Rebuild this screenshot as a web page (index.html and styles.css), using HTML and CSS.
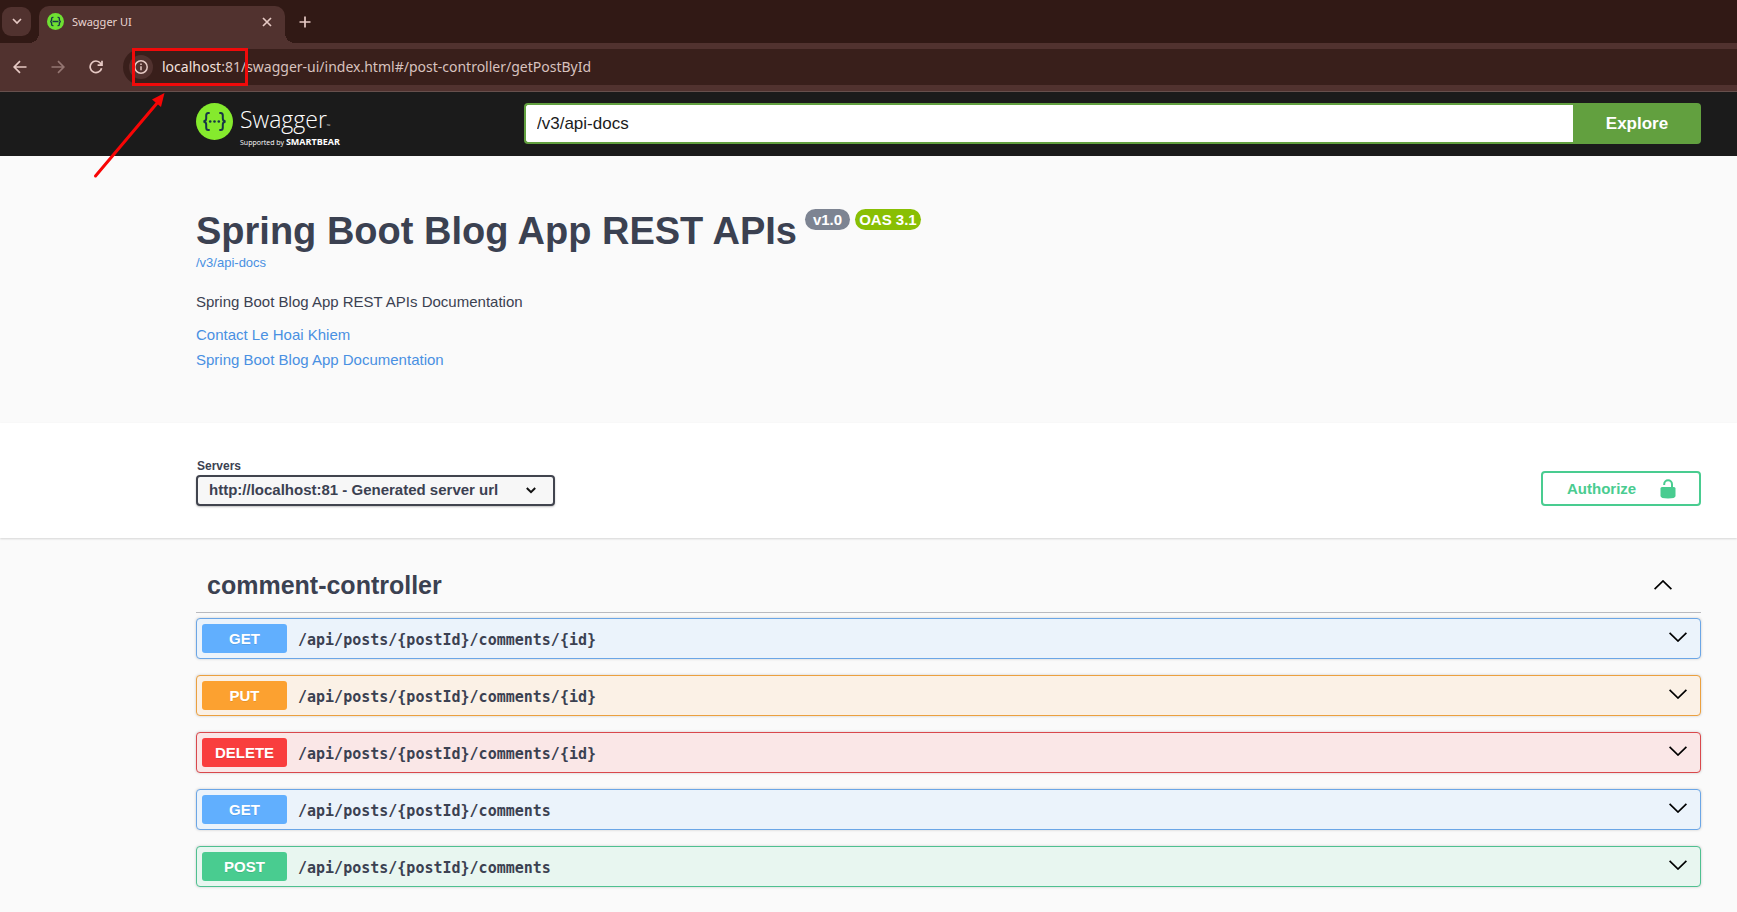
FILE: index.html
```html
<!DOCTYPE html>
<html lang="en">
<head>
<meta charset="utf-8">
<title>Swagger UI</title>
<link rel="stylesheet" href="styles.css">
</head>
<body>
<div class="browser">
  <div class="tabbar">
    <button class="tab-search" aria-label="Search tabs"><svg width="10" height="7" viewBox="0 0 10 7"><path d="M1 1l4 4 4-4"/></svg></button>
    <div class="tab">
      <svg class="favicon" width="17" height="17" viewBox="0 0 37 37"><circle cx="18.500" cy="18.500" r="18.500" fill="#6fe032"/><path d="M14 9.500h-1.500q-2.500 0-2.500 3v2.500q0 3-3 3.500 3 .5 3 3.500v2.500q0 3 2.500 3H14M23 9.500h1.500q2.500 0 2.500 3v2.500q0 3 3 3.500-3 .5-3 3.500v2.500q0 3-2.500 3H23M12 18.500h13" fill="none" stroke="#173647" stroke-width="3"/></svg>
      <span class="tab-title">Swagger UI</span>
      <button class="tab-close" aria-label="Close tab"><svg width="10" height="10" viewBox="0 0 10 10"><path d="M1 1l8 8M9 1l-8 8"/></svg></button>
    </div>
    <button class="tab-new" aria-label="New tab"><svg width="12" height="12" viewBox="0 0 12 12"><path d="M6 .5v11M.5 6h11"/></svg></button>
  </div>
  <div class="toolbar">
    <button class="nav" aria-label="Back"><svg width="14" height="14" viewBox="0 0 14 14"><path d="M13.500 7H1.500M7 1.200L1.200 7 7 12.800"/></svg></button>
    <button class="nav nav-off" aria-label="Forward"><svg width="14" height="14" viewBox="0 0 14 14"><path d="M.5 7h12M7 1.200L12.800 7 7 12.800"/></svg></button>
    <button class="nav" aria-label="Reload"><svg width="14" height="14" viewBox="0 0 14 14"><path d="M12.600 8.200A5.800 5.800 0 1 1 11.500 3.200L13 5M13 .8V5.200H8.600"/></svg></button>
    <div class="address">
      <button class="site-info" aria-label="Site information"><svg width="14" height="14" viewBox="0 0 14 14"><circle cx="7" cy="7" r="6.200"/><path d="M7 6.200v4M7 3.600v1.400"/></svg></button>
      <span class="url"><span class="host">localhost</span>:81/swagger-ui/index.html#/post-controller/getPostById</span>
    </div>
  </div>
</div>

<header class="topbar">
  <a class="logo" href="#">
    <svg width="37" height="37" viewBox="0 0 37 37"><circle cx="18.500" cy="18.500" r="18.500" fill="#85ea2d"/><path d="M13.700 10h-1.500q-2 0-2 2.500v3q0 2.500-2.700 3 2.700.5 2.700 3v3q0 2.500 2 2.500h1.500M23.300 10h1.500q2 0 2 2.500v3q0 2.500 2.700 3-2.700.5-2.700 3v3q0 2.500-2 2.500h-1.500" fill="none" stroke="#173647" stroke-width="2"/><g fill="#173647"><circle cx="14.200" cy="18.500" r="1.300"/><circle cx="18.500" cy="18.500" r="1.300"/><circle cx="22.800" cy="18.500" r="1.300"/></g></svg>
    <span class="wordmark">
      <span class="brand">Swagger<span class="tm">™</span></span>
      <span class="support">Supported by <b>SMARTBEAR</b></span>
    </span>
  </a>
  <form class="explore">
    <input type="text" value="/v3/api-docs" aria-label="API definition URL">
    <button type="button">Explore</button>
  </form>
</header>

<main>
  <section class="info">
    <div class="title-row">
      <h1>Spring Boot Blog App REST APIs</h1>
      <span class="pill version">v1.0</span>
      <span class="pill oas">OAS 3.1</span>
    </div>
    <a class="spec" href="#">/v3/api-docs</a>
    <p>Spring Boot Blog App REST APIs Documentation</p>
    <a class="info-link" href="#">Contact Le Hoai Khiem</a>
    <a class="info-link" href="#">Spring Boot Blog App Documentation</a>
  </section>

  <section class="schemes">
    <div class="servers">
      <label for="server">Servers</label>
      <div class="select-wrap">
        <select id="server"><option>http://localhost:81 - Generated server url</option></select>
        <svg width="10" height="7" viewBox="0 0 10 7"><path d="M.8 1L5 5.200 9.200 1"/></svg>
      </div>
    </div>
    <button class="authorize"><span>Authorize</span><svg width="16" height="20" viewBox="0 0 16 20"><path d="M4.200 6V5.200a3.900 3.900 0 0 1 7.800 0V9" fill="none" stroke="#49cc90" stroke-width="2"/><path d="M2 8h12q1.500 0 1.500 1.500V17q0 2.500-7.500 2.500T.5 17V9.500Q.5 8 2 8z" fill="#49cc90"/></svg></button>
  </section>

  <section class="operations">
    <div class="tag">
      <h2>comment-controller</h2>
      <button class="toggle" aria-label="Collapse"><svg width="18" height="10" viewBox="0 0 18 10"><path d="M.6 9.200L9 1l8.400 8.200"/></svg></button>
    </div>
    <div class="op get"><span class="method">GET</span><span class="path">/api/posts/{postId}/comments/{id}</span><button class="toggle" aria-label="Expand"><svg width="18" height="10" viewBox="0 0 18 10"><path d="M.6.8L9 9 17.400.8"/></svg></button></div>
    <div class="op put"><span class="method">PUT</span><span class="path">/api/posts/{postId}/comments/{id}</span><button class="toggle" aria-label="Expand"><svg width="18" height="10" viewBox="0 0 18 10"><path d="M.6.8L9 9 17.400.8"/></svg></button></div>
    <div class="op delete"><span class="method">DELETE</span><span class="path">/api/posts/{postId}/comments/{id}</span><button class="toggle" aria-label="Expand"><svg width="18" height="10" viewBox="0 0 18 10"><path d="M.6.8L9 9 17.400.8"/></svg></button></div>
    <div class="op get"><span class="method">GET</span><span class="path">/api/posts/{postId}/comments</span><button class="toggle" aria-label="Expand"><svg width="18" height="10" viewBox="0 0 18 10"><path d="M.6.8L9 9 17.400.8"/></svg></button></div>
    <div class="op post"><span class="method">POST</span><span class="path">/api/posts/{postId}/comments</span><button class="toggle" aria-label="Expand"><svg width="18" height="10" viewBox="0 0 18 10"><path d="M.6.8L9 9 17.400.8"/></svg></button></div>
  </section>
</main>

<svg class="callout" width="170" height="140" viewBox="0 0 170 140" aria-hidden="true">
  <rect x="48.500" y="6.500" width="113" height="35" fill="none" stroke="#f00a0a" stroke-width="3"/>
  <path d="M10.500 133L73 59" stroke="#f80505" stroke-width="3" stroke-linecap="round"/>
  <path d="M79.500 50l-3.500 14-9-7.500z" fill="#f80505"/>
</svg>
</body>
</html>
```
FILE: styles.css
```css
* { box-sizing: border-box; }
body {
  margin: 0;
  background: #fafafa;
  color: #3b4151;
  font-family: "Liberation Sans", Arial, sans-serif;
  font-size: 15px;
}
button { border: 0; padding: 0; background: none; font-family: inherit; cursor: pointer; }
a { text-decoration: none; }
svg { display: block; flex: none; }

/* Browser frame */
.browser { font-family: "Noto Sans", "Open Sans", sans-serif; color: #e9d5d1; background: #51322f; border-bottom: 1px solid #67504d; }
.browser svg:not(.favicon) { fill: none; stroke: #e6c9c4; stroke-width: 1.700; }
.tabbar { display: flex; align-items: center; height: 43px; padding-left: 2px; background: #311915; }
.tab-search { display: grid; place-items: center; width: 29px; height: 29px; border-radius: 9px; background: #51322f; }
.tab { display: flex; align-items: center; align-self: flex-end; width: 246px; height: 37px; margin-left: 8px; padding: 0 13px 6px 8px; border-radius: 10px 10px 0 0; background: #51322f; position: relative; }
.tab::before, .tab::after { content: ""; position: absolute; bottom: 0; width: 10px; height: 10px; }
.tab::before { left: -10px; background: radial-gradient(circle at 0 0, #311915 10px, #51322f 10px); }
.tab::after { right: -10px; background: radial-gradient(circle at 100% 0, #311915 10px, #51322f 10px); }
.tab-title { flex: 1; margin-left: 8px; font-size: 11px; line-height: 16px; }
.tab-new { margin-left: 14px; }
.toolbar { display: flex; align-items: center; height: 48px; padding: 0 0 1px 13px; }
.nav { margin-right: 24px; }
.nav:nth-child(3) { margin-right: 20px; }
.nav-off { opacity: .45; }
.address { display: flex; align-items: center; flex: 1; height: 36px; padding-left: 6px; border-radius: 18px 0 0 18px; background: #391f1b; }
.site-info { display: grid; place-items: center; width: 24px; height: 24px; border-radius: 12px; background: #51322f; }
.browser .site-info svg { stroke-width: 1.500; }
.url { margin-left: 9px; font-size: 14px; line-height: 20px; color: #d8c2bf; }
.host { color: #f3e1de; }

/* Swagger header */
.topbar { display: flex; align-items: flex-start; height: 64px; padding: 11px 36px 0 196px; background: #1b1b1b; }
.logo { display: flex; flex: none; width: 328px; gap: 7px; color: #fff; font-family: "Open Sans", "Noto Sans", sans-serif; }
.wordmark { display: flex; flex-direction: column; gap: 4px; padding-top: 3px; }
.brand { font-size: 23px; line-height: 27px; font-weight: 300; }
.tm { font-size: 5px; line-height: 5px; }
.support { font-size: 7px; line-height: 9px; }
.support b { font-size: 9px; line-height: 9px; font-weight: 700; }
.explore { display: flex; flex: 1; height: 41px; }
.explore input { flex: 1; min-width: 0; padding: 0 11px; border: 2px solid #62a03f; border-right: 0; border-radius: 4px 0 0 4px; background: #fff; color: #1b1b1b; font: 17px "Liberation Sans", Arial, sans-serif; }
.explore button { width: 128px; border-radius: 0 4px 4px 0; background: #62a03f; color: #fff; font-size: 17px; font-weight: 700; }

/* Description */
.info { display: flex; flex-direction: column; align-items: flex-start; padding: 53px 36px 51px 196px; }
.title-row { display: flex; align-items: flex-start; }
h1 { margin: 0 8px 0 0; font-size: 38px; line-height: 44px; }
.pill { height: 21px; border-radius: 11px; color: #fff; font-size: 15px; line-height: 21px; font-weight: 700; }
.version { margin-right: 5px; padding: 0 8px; background: #7d8492; }
.oas { padding: 0 4px; background: #89bf04; }
.spec { font-size: 13px; line-height: 20px; color: #4990e2; }
.info p { margin: 16px 0 8px; line-height: 25px; }
.info-link { line-height: 25px; color: #4990e2; }

/* Server and authorization */
.schemes { display: flex; justify-content: space-between; align-items: flex-end; padding: 34px 36px 32px 196px; background: #fff; box-shadow: 0 1px 2px rgba(0, 0, 0, .15); }
.servers { display: flex; flex-direction: column; }
.servers label { padding-left: 1px; font-size: 12px; line-height: 18px; font-weight: 700; }
.select-wrap { display: grid; align-items: center; }
.select-wrap > * { grid-area: 1 / 1; }
.select-wrap svg { justify-self: end; margin-right: 19px; fill: none; stroke: #111; stroke-width: 2; pointer-events: none; }
select { appearance: none; height: 31px; padding: 0 54px 2px 11px; border: 2px solid #41444e; border-radius: 4px; background: #f7f7f7; box-shadow: 0 1px 2px rgba(0, 0, 0, .25); color: #3b4151; font: 700 15px "Liberation Sans", Arial, sans-serif; }
.authorize { display: flex; align-items: center; justify-content: space-between; width: 160px; height: 35px; padding: 0 23px 0 24px; border: 2px solid #49cc90; border-radius: 4px; color: #49cc90; font-size: 15px; font-weight: 700; }

/* Operations */
.operations { display: flex; flex-direction: column; gap: 16px; padding: 19px 36px 24px 196px; }
.tag { display: flex; align-items: center; justify-content: space-between; height: 56px; margin-bottom: -11px; padding: 0 29px 0 11px; border-bottom: 1px solid #b9babf; }
h2 { margin: 0; font-size: 25px; line-height: 32px; }
.toggle svg { fill: none; stroke: #000; stroke-width: 1.700; }
.op { display: flex; align-items: center; padding: 5px 13px 5px 5px; border: 1px solid; border-radius: 4px; box-shadow: 0 0 3px rgba(0, 0, 0, .19); }
.op .toggle { margin-bottom: 4px; }
.method { width: 85px; border-radius: 3px; color: #fff; font-weight: 700; line-height: 29px; text-align: center; text-shadow: 0 1px 0 rgba(0, 0, 0, .1); }
.path { flex: 1; padding: 2px 0 0 11px; font: 700 15px/20px "DejaVu Sans Mono", monospace; }
.get { background: #ebf3fb; border-color: #6ba6e6; }
.get .method { background: #61affe; }
.put { background: #fbf1e6; border-color: #eba03f; }
.put .method { background: #fca130; }
.delete { background: #fae7e7; border-color: #d9484c; }
.delete .method { background: #f93e3e; }
.post { background: #e8f6f0; border-color: #4fc090; }
.post .method { background: #49cc90; }

/* Marker drawn over the address bar */
.callout { position: absolute; left: 85px; top: 43px; pointer-events: none; }
```
